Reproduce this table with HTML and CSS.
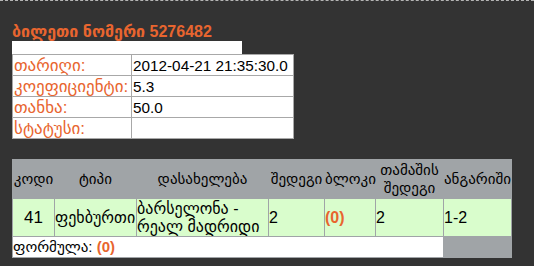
FILE: index.html
```html
<!DOCTYPE html>
<html lang="ka">
<head>
    <meta charset="UTF-8">
    <meta name="viewport" content="width=device-width, initial-scale=1.0">
    <title>ბილეთი</title>
    <link rel="stylesheet" href="styles.css">
</head>
<body>
    <div class="ticket">
        <h2 class="ticket-title">ბილეთი ნომერი <span class="num">5276482</span></h2>
        <div class="blank-bar"></div>

        <table class="info">
            <tr>
                <td class="label">თარიღი:</td>
                <td class="value">2012-04-21 21:35:30.0</td>
            </tr>
            <tr>
                <td class="label">კოეფიციენტი:</td>
                <td class="value">5.3</td>
            </tr>
            <tr>
                <td class="label">თანხა:</td>
                <td class="value">50.0</td>
            </tr>
            <tr>
                <td class="label">სტატუსი:</td>
                <td class="value"></td>
            </tr>
        </table>

        <table class="bets">
            <colgroup>
                <col class="c-code">
                <col class="c-type">
                <col class="c-name">
                <col class="c-result">
                <col class="c-block">
                <col class="c-game">
                <col class="c-score">
            </colgroup>
            <tr class="head">
                <th>კოდი</th>
                <th>ტიპი</th>
                <th>დასახელება</th>
                <th>შედეგი</th>
                <th>ბლოკი</th>
                <th>თამაშის შედეგი</th>
                <th>ანგარიში</th>
            </tr>
            <tr class="row">
                <td class="code">41</td>
                <td>ფეხბურთი</td>
                <td>ბარსელონა - რეალ მადრიდი</td>
                <td>2</td>
                <td class="block"><span class="zero">(0)</span></td>
                <td>2</td>
                <td>1-2</td>
            </tr>
            <tr class="foot">
                <td colspan="6" class="formula">ფორმულა: <span class="zero">(0)</span></td>
                <td class="empty"></td>
            </tr>
        </table>
    </div>
</body>
</html>
```

FILE: styles.css
```css
* {
    margin: 0;
    padding: 0;
    box-sizing: border-box;
}

body {
    background: #333333;
    border-top: 1px dashed #b5b5b5;
    font-family: "Liberation Sans", "DejaVu Sans", sans-serif;
    color: #000;
}

.ticket {
    padding: 21px 12px 0 12px;
}

.ticket-title {
    color: #e8652f;
    font-size: 16px;
    font-weight: bold;
    line-height: 19px;
}

.blank-bar {
    width: 230px;
    height: 13px;
    background: #fff;
}

/* ticket details */
.info {
    border-collapse: collapse;
    table-layout: fixed;
    background: #fff;
    width: 282px;
    border: 1px solid #8c8c8c;
}

.info td {
    height: 21px;
    border: 1px solid #a8a8a8;
    padding: 0 1px;
    line-height: 19px;
    vertical-align: middle;
    white-space: nowrap;
    overflow: hidden;
}

.info .label {
    width: 119px;
    color: #e8652f;
    font-size: 17px;
}

.info .value {
    font-size: 15.3px;
}

/* bets list */
.bets {
    margin-top: 20px;
    width: 500px;
    table-layout: fixed;
    border-spacing: 1px;
    background: #a0a4a7;
    font-size: 15px;
}

.c-code { width: 41px; }
.c-type { width: 81px; }
.c-name { width: 131px; }
.c-result { width: 55px; }
.c-block { width: 50px; }
.c-game { width: 67px; }
.c-score { width: 67px; }

.bets th {
    font-weight: normal;
    height: 38px;
    line-height: 18px;
    text-align: center;
    padding: 0;
    white-space: nowrap;
}

.bets .head th:nth-child(6) {
    white-space: normal;
}

.bets .row td {
    background: #d9fdcc;
    height: 37px;
    line-height: 18px;
    font-size: 16px;
    padding: 0;
    white-space: nowrap;
}

.bets .row td:nth-child(3) {
    white-space: normal;
}

.bets .row .code {
    text-align: center;
    font-size: 17px;
}

.zero {
    color: #e8652f;
    font-weight: bold;
}

.bets .foot td {
    height: 20px;
    padding: 0;
}

.bets .formula {
    background: #fff;
}
```
